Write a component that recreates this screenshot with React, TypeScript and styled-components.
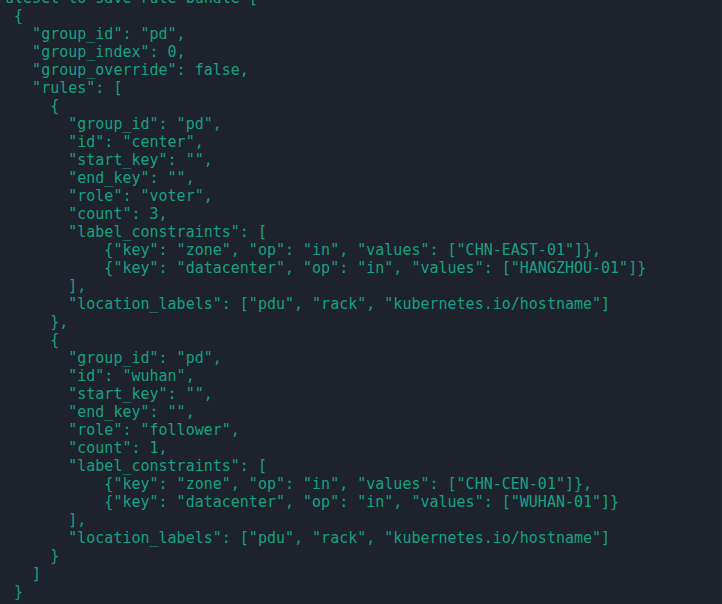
import React from "react";
import styled, { createGlobalStyle } from "styled-components";

const GlobalStyle = createGlobalStyle`
  html, body {
    margin: 0;
    padding: 0;
    background: #1e222a;
  }
  #root {
    height: 100vh;
  }
`;

const Terminal = styled.div`
  width: 722px;
  height: 604px;
  box-sizing: border-box;
  overflow: hidden;
  background: #1e222a;
  border-right: 1px solid #262a33;
`;

const Output = styled.pre`
  margin: -11px 0 0 -4px;
  padding: 0;
  font-family: "DejaVu Sans Mono", "Liberation Mono", monospace;
  font-size: 15px;
  line-height: 18px;
  color: #16a085;
  white-space: pre;
`;

const lines = [
  `ruleset to save rule bundle [`,
  `  {`,
  `    "group_id": "pd",`,
  `    "group_index": 0,`,
  `    "group_override": false,`,
  `    "rules": [`,
  `      {`,
  `        "group_id": "pd",`,
  `        "id": "center",`,
  `        "start_key": "",`,
  `        "end_key": "",`,
  `        "role": "voter",`,
  `        "count": 3,`,
  `        "label_constraints": [`,
  `            {"key": "zone", "op": "in", "values": ["CHN-EAST-01"]},`,
  `            {"key": "datacenter", "op": "in", "values": ["HANGZHOU-01"]}`,
  `        ],`,
  `        "location_labels": ["pdu", "rack", "kubernetes.io/hostname"]`,
  `      },`,
  `      {`,
  `        "group_id": "pd",`,
  `        "id": "wuhan",`,
  `        "start_key": "",`,
  `        "end_key": "",`,
  `        "role": "follower",`,
  `        "count": 1,`,
  `        "label_constraints": [`,
  `            {"key": "zone", "op": "in", "values": ["CHN-CEN-01"]},`,
  `            {"key": "datacenter", "op": "in", "values": ["WUHAN-01"]}`,
  `        ],`,
  `        "location_labels": ["pdu", "rack", "kubernetes.io/hostname"]`,
  `      }`,
  `    ]`,
  `  }`,
];

export default function App() {
  return (
    <>
      <GlobalStyle />
      <Terminal>
        <Output>{lines.join("\n")}</Output>
      </Terminal>
    </>
  );
}
